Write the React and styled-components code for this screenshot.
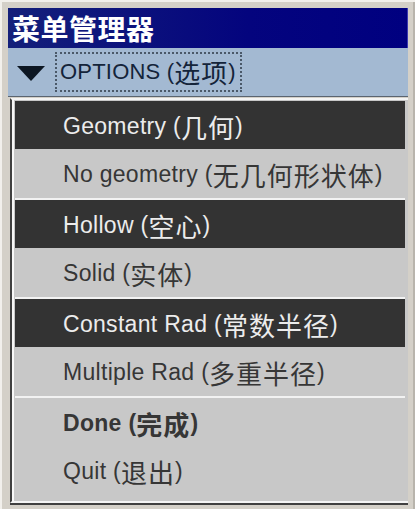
import styled, { createGlobalStyle } from 'styled-components'

const Global = createGlobalStyle`
    html, body {
        margin: 0;
        padding: 0;
        background: #d4d0c8;
    }
    body {
        font-family: "Liberation Sans", "Noto Sans CJK SC", sans-serif;
    }
`

const Frame = styled.div`
    width: 415px;
    height: 509px;
    box-sizing: border-box;
    padding: 8px 7px 0 8px;
    background: #d4d0c8;
    box-shadow: inset 2px 2px 0 #f2f0ec, inset -2px 0 0 #b8b4ac;
`

const TitleBar = styled.div`
    height: 40px;
    display: flex;
    align-items: center;
    padding-left: 4px;
    background: linear-gradient(90deg, #14207a 0%, #04047e 60%, #000080 100%);
    color: #ffffff;
    font-family: "Noto Sans CJK SC", sans-serif;
    font-weight: 700;
    font-size: 28px;
    letter-spacing: 0.5px;
    box-shadow: inset -1px 0 0 #3a3ab0;
`

const OptionsRow = styled.div`
    height: 49px;
    display: flex;
    align-items: center;
    gap: 10px;
    padding-left: 9px;
    background: #a3b9d2;
    border-bottom: 1px solid #5a6470;
    box-sizing: border-box;
`

const Arrow = styled.svg`
    width: 28px;
    height: 16px;
    margin-top: 4px;
`

const FocusLabel = styled.div`
    display: flex;
    align-items: center;
    height: 36px;
    padding: 0 4px 0 3px;
    border: 2px dotted #4a5868;
    color: #14243a;
    font-size: 22px;
    letter-spacing: 0.2px;
`

const Panel = styled.div`
    margin: 1px 0 0 2px;
    height: 400px;
    background: #c8c8c8;
    border-left: 2px solid #404040;
    border-top: 2px solid #f4f4f4;
    border-bottom: 2px solid #f4f4f4;
    box-shadow: inset 2px 0 0 #f8f8f8, 0 2px 0 #404040;
    padding: 1px 3px 0 3px;
    display: flex;
    flex-direction: column;
`

const Group = styled.div`
    display: flex;
    flex-direction: column;
    & + & {
        margin-top: 1px;
        border-top: 2px solid #f2f2f2;
    }
`

const Item = styled.div`
    height: 48px;
    display: flex;
    align-items: center;
    padding-left: 48px;
    padding-top: 3px;
    box-sizing: border-box;
    font-size: 23px;
    letter-spacing: 0.3px;
    font-weight: ${p => (p.$bold ? 700 : 400)};
    background: ${p => (p.$active ? '#333333' : '#c8c8c8')};
    color: ${p => (p.$active ? '#ececec' : '#363636')};
`

const Cjk = styled.span`
    font-family: "Noto Sans CJK SC", sans-serif;
    font-size: 26px;
    letter-spacing: 1px;
    line-height: 1;
`

const Label = ({ en, zh }) => (
    <>
        {en}&nbsp;(<Cjk>{zh}</Cjk>)
    </>
)

const groups = [
    [
        { en: 'Geometry', zh: '几何', active: true },
        { en: 'No geometry', zh: '无几何形状体' },
    ],
    [
        { en: 'Hollow', zh: '空心', active: true },
        { en: 'Solid', zh: '实体' },
    ],
    [
        { en: 'Constant Rad', zh: '常数半径', active: true },
        { en: 'Multiple Rad', zh: '多重半径' },
    ],
    [
        { en: 'Done', zh: '完成', bold: true },
        { en: 'Quit', zh: '退出' },
    ],
]

const App = () => {
    return (
        <Frame>
            <Global />
            <TitleBar>菜单管理器</TitleBar>
            <OptionsRow>
                <Arrow viewBox="0 0 28 16">
                    <polygon points="0,0 28,0 14,15" fill="#0c1622" />
                </Arrow>
                <FocusLabel>
                    <Label en="OPTIONS" zh="选项" />
                </FocusLabel>
            </OptionsRow>
            <Panel>
                {groups.map((group, gi) => (
                    <Group key={'group-' + gi}>
                        {group.map(item => (
                            <Item key={item.en} $active={item.active} $bold={item.bold}>
                                <Label en={item.en} zh={item.zh} />
                            </Item>
                        ))}
                    </Group>
                ))}
            </Panel>
        </Frame>
    )
}

export default App
